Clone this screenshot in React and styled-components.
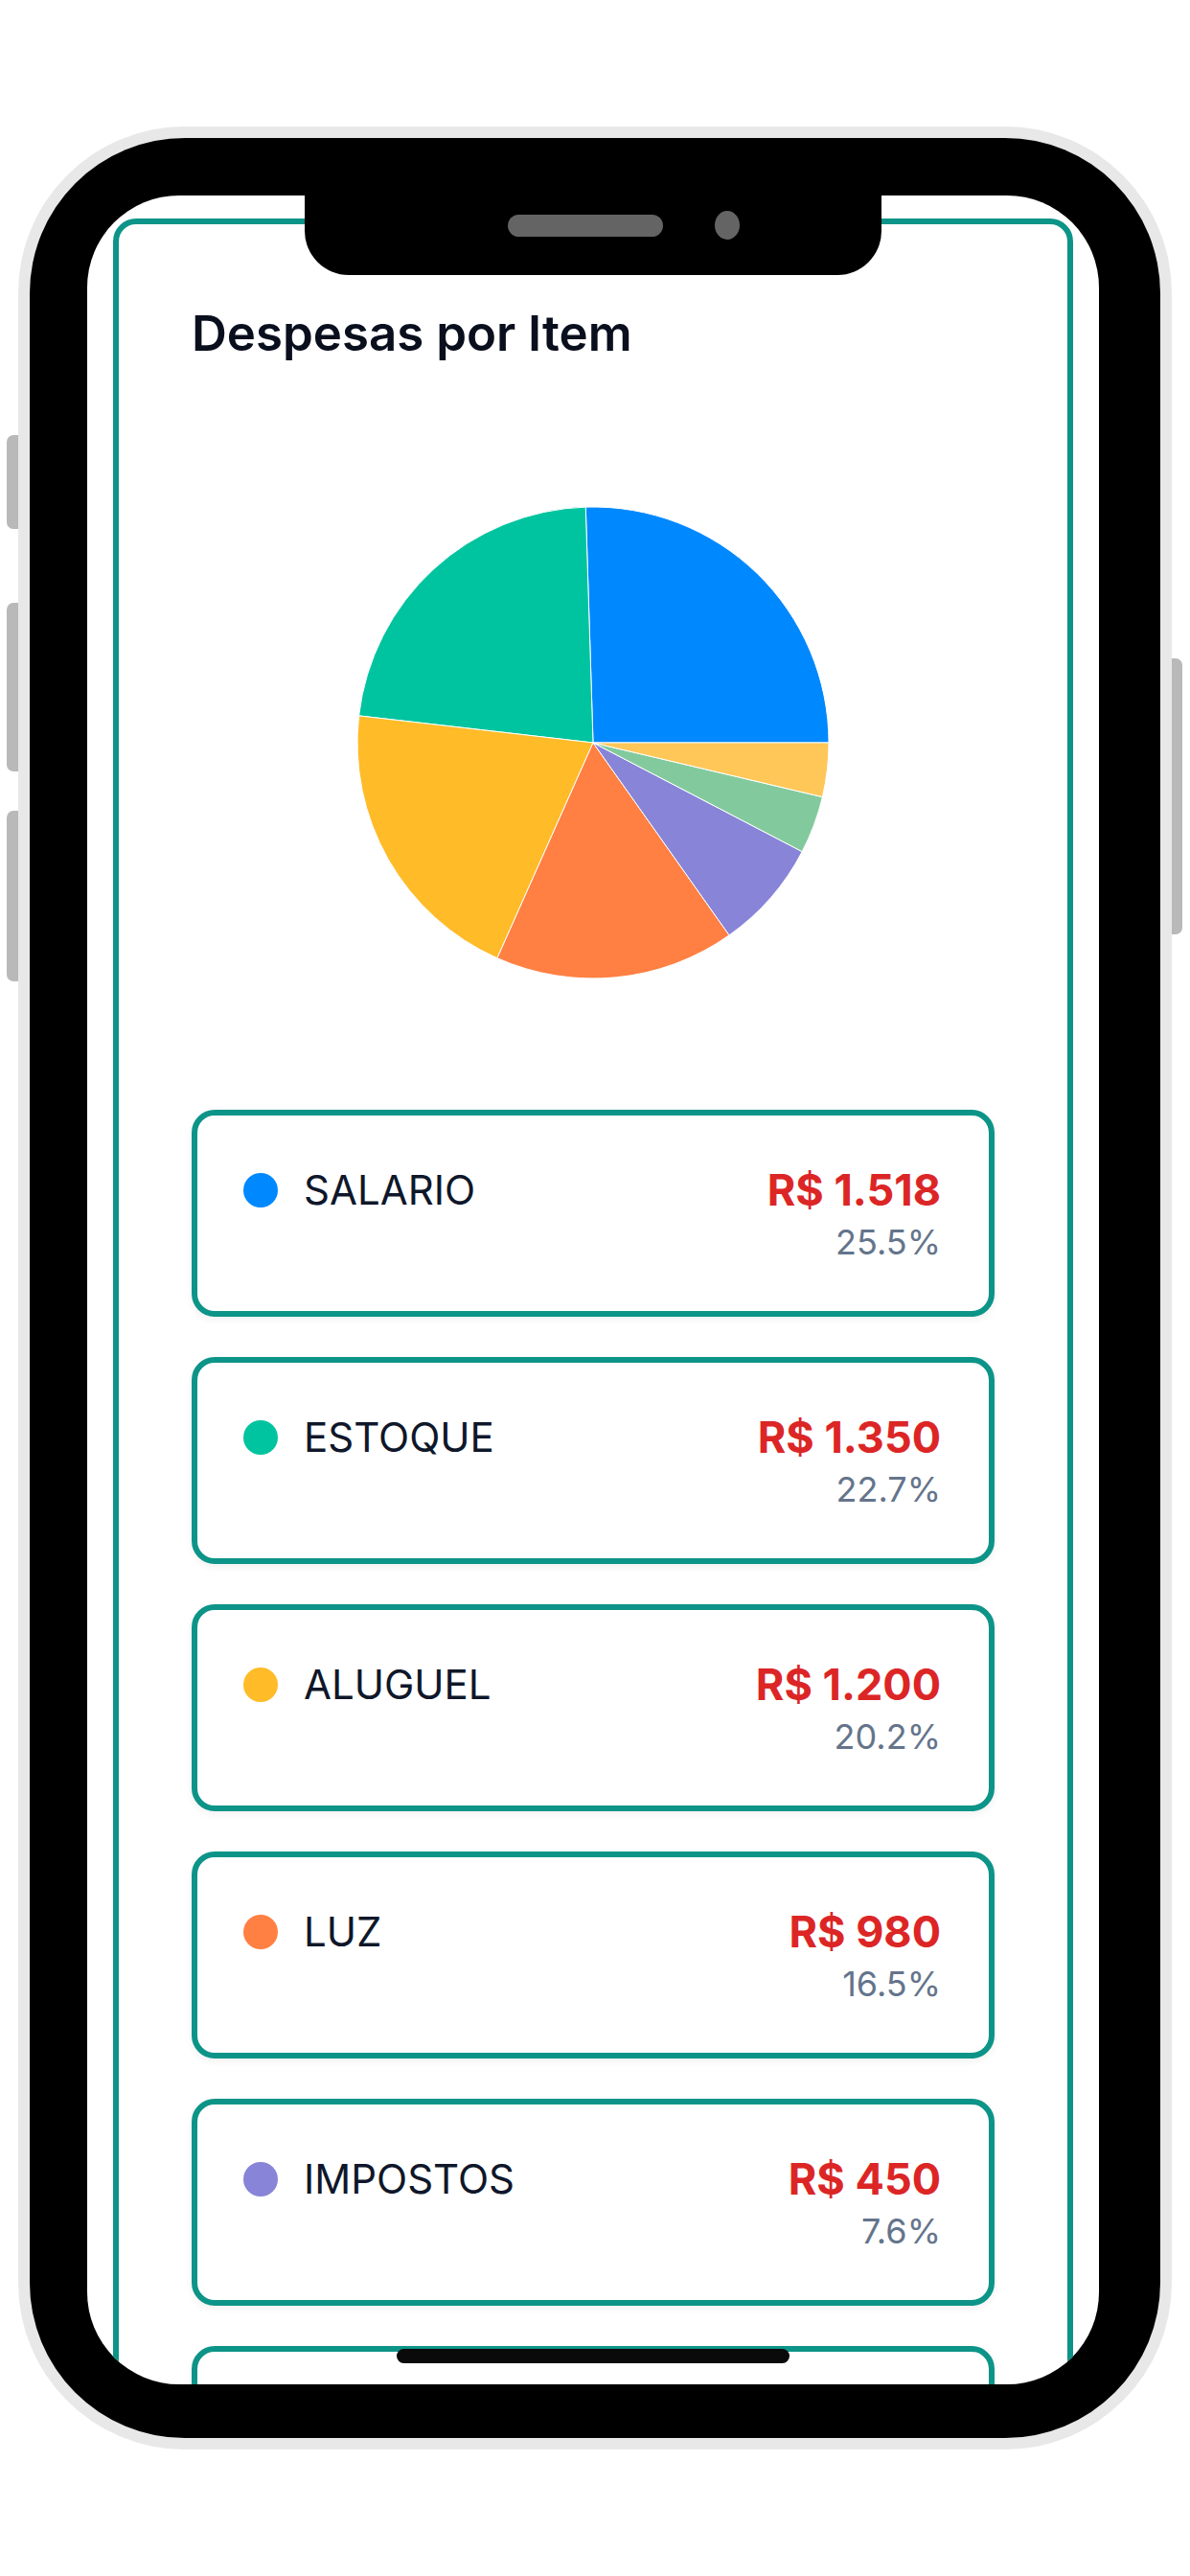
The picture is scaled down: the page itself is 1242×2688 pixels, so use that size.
import React from "react";
import styled, { createGlobalStyle } from "styled-components";

const items = [
  { name: "SALARIO", value: 1518, color: "#0088FE" },
  { name: "ESTOQUE", value: 1350, color: "#00C49F" },
  { name: "ALUGUEL", value: 1200, color: "#FFBB28" },
  { name: "LUZ", value: 980, color: "#FF8042" },
  { name: "IMPOSTOS", value: 450, color: "#8884d8" },
  { name: "INTERNET", value: 235, color: "#82ca9d" },
  { name: "ÁGUA", value: 220, color: "#ffc658" },
];

const total = items.reduce((sum, i) => sum + i.value, 0);

const formatBRL = (n) =>
  "R$ " + String(n).replace(/\B(?=(\d{3})+(?!\d))/g, ".");

// recharts-like pie: starts at 3 o'clock, runs counter-clockwise
const slicePath = (cx, cy, r, a0, a1) => {
  const rad = (a) => (a * Math.PI) / 180;
  const x0 = cx + r * Math.cos(rad(a0));
  const y0 = cy - r * Math.sin(rad(a0));
  const x1 = cx + r * Math.cos(rad(a1));
  const y1 = cy - r * Math.sin(rad(a1));
  const large = a1 - a0 > 180 ? 1 : 0;
  return `M${cx},${cy} L${x0},${y0} A${r},${r} 0 ${large} 0 ${x1},${y1} Z`;
};

const PieChart = () => {
  let angle = 0;
  return (
    <svg width="600" height="600" viewBox="0 0 600 600">
      {items.map((item) => {
        const sweep = (item.value / total) * 360;
        const d = slicePath(300, 300, 246, angle, angle + sweep);
        angle += sweep;
        return <path key={item.name} d={d} fill={item.color} stroke="#fff" strokeWidth="1" />;
      })}
    </svg>
  );
};

const App = () => {
  return (
    <>
      <GlobalStyle />
      <Page>
        <Phone>
          <SideButton side="left" top={322} size={98} />
          <SideButton side="left" top={497} size={176} />
          <SideButton side="left" top={714} size={178} />
          <SideButton side="right" top={555} size={288} />
          <Bezel>
            <Screen>
              <Notch>
                <Speaker />
                <Camera />
              </Notch>
              <AppFrame>
                <Title>Despesas por Item</Title>
                <ChartBox>
                  <PieChart />
                </ChartBox>
                <CardList>
                  {items.map((item) => (
                    <Card key={item.name}>
                      <Label>
                        <Dot color={item.color} />
                        <Name>{item.name}</Name>
                      </Label>
                      <Values>
                        <Amount>{formatBRL(item.value)}</Amount>
                        <Percent>{((item.value / total) * 100).toFixed(1)}%</Percent>
                      </Values>
                    </Card>
                  ))}
                </CardList>
              </AppFrame>
              <HomeIndicator />
            </Screen>
          </Bezel>
        </Phone>
      </Page>
    </>
  );
};

const GlobalStyle = createGlobalStyle`
  * { box-sizing: border-box; }
  body {
    margin: 0;
    background: #fff;
    font-family: Inter, "Noto Sans", sans-serif;
  }
`;

const Page = styled.div`
  width: 1242px;
  height: 2688px;
  display: flex;
  align-items: center;
  justify-content: center;
`;

const Phone = styled.div`
  position: relative;
  width: 1204px;
  height: 2424px;
  padding: 12px;
  border-radius: 174px;
  background: #e8e8e8;
`;

const SideButton = styled.div`
  position: absolute;
  top: ${(p) => p.top}px;
  height: ${(p) => p.size}px;
  width: 16px;
  background: #b9b9b9;
  z-index: -1;
  ${(p) =>
    p.side === "left"
      ? "left: -12px; border-radius: 7px 0 0 7px;"
      : "right: -11px; border-radius: 0 7px 7px 0;"}
`;

const Bezel = styled.div`
  width: 100%;
  height: 100%;
  padding: 60px 64px 56px 60px;
  border-radius: 162px;
  background: #000;
`;

const Screen = styled.div`
  position: relative;
  width: 100%;
  height: 100%;
  border-radius: 96px;
  background: #fff;
  overflow: hidden;
  padding: 24px 27px 0;
`;

const Notch = styled.div`
  position: absolute;
  top: 0;
  left: 227px;
  width: 602px;
  height: 83px;
  display: flex;
  align-items: center;
  gap: 54px;
  padding: 15px 0 36px 212px;
  background: #000;
  border-radius: 0 0 46px 46px;
  z-index: 2;
`;

const Speaker = styled.div`
  width: 162px;
  height: 23px;
  border-radius: 12px;
  background: #646464;
`;

const Camera = styled.div`
  width: 26px;
  height: 30px;
  border-radius: 50%;
  background: #646464;
`;

const HomeIndicator = styled.div`
  position: absolute;
  left: 50%;
  bottom: 22px;
  width: 410px;
  height: 15px;
  margin-left: -205px;
  border-radius: 8px;
  background: #0a0a0a;
  z-index: 2;
`;

const AppFrame = styled.div`
  border: 6px solid #0d9488;
  border-radius: 24px;
  padding: 84px 76px 0;
  min-height: 2600px;
`;

const Title = styled.h1`
  margin: 0;
  font-size: 51px;
  line-height: 60px;
  font-weight: 600;
  color: #0a0f1e;
`;

const ChartBox = styled.div`
  display: flex;
  justify-content: center;
  height: 600px;
  margin-top: 97px;
`;

const CardList = styled.div`
  display: flex;
  flex-direction: column;
  gap: 42px;
  margin-top: 83px;
`;

const Card = styled.div`
  display: flex;
  justify-content: space-between;
  align-items: flex-start;
  padding: 48px 50px 48px 48px;
  border: 6px solid #0d9488;
  border-radius: 24px;
  background: #fff;
  box-shadow: 0 3px 8px rgba(0, 0, 0, 0.06);
`;

const Label = styled.div`
  display: flex;
  align-items: center;
  gap: 27px;
  height: 60px;
`;

const Dot = styled.span`
  width: 36px;
  height: 36px;
  border-radius: 50%;
  background: ${(p) => p.color};
`;

const Name = styled.span`
  font-size: 42px;
  line-height: 60px;
  color: #0f172a;
`;

const Values = styled.div`
  display: flex;
  flex-direction: column;
  align-items: flex-end;
`;

const Amount = styled.span`
  font-size: 45px;
  line-height: 60px;
  font-weight: 700;
  color: #dc2626;
`;

const Percent = styled.span`
  font-size: 36px;
  line-height: 48px;
  color: #64748b;
`;

export default App;
